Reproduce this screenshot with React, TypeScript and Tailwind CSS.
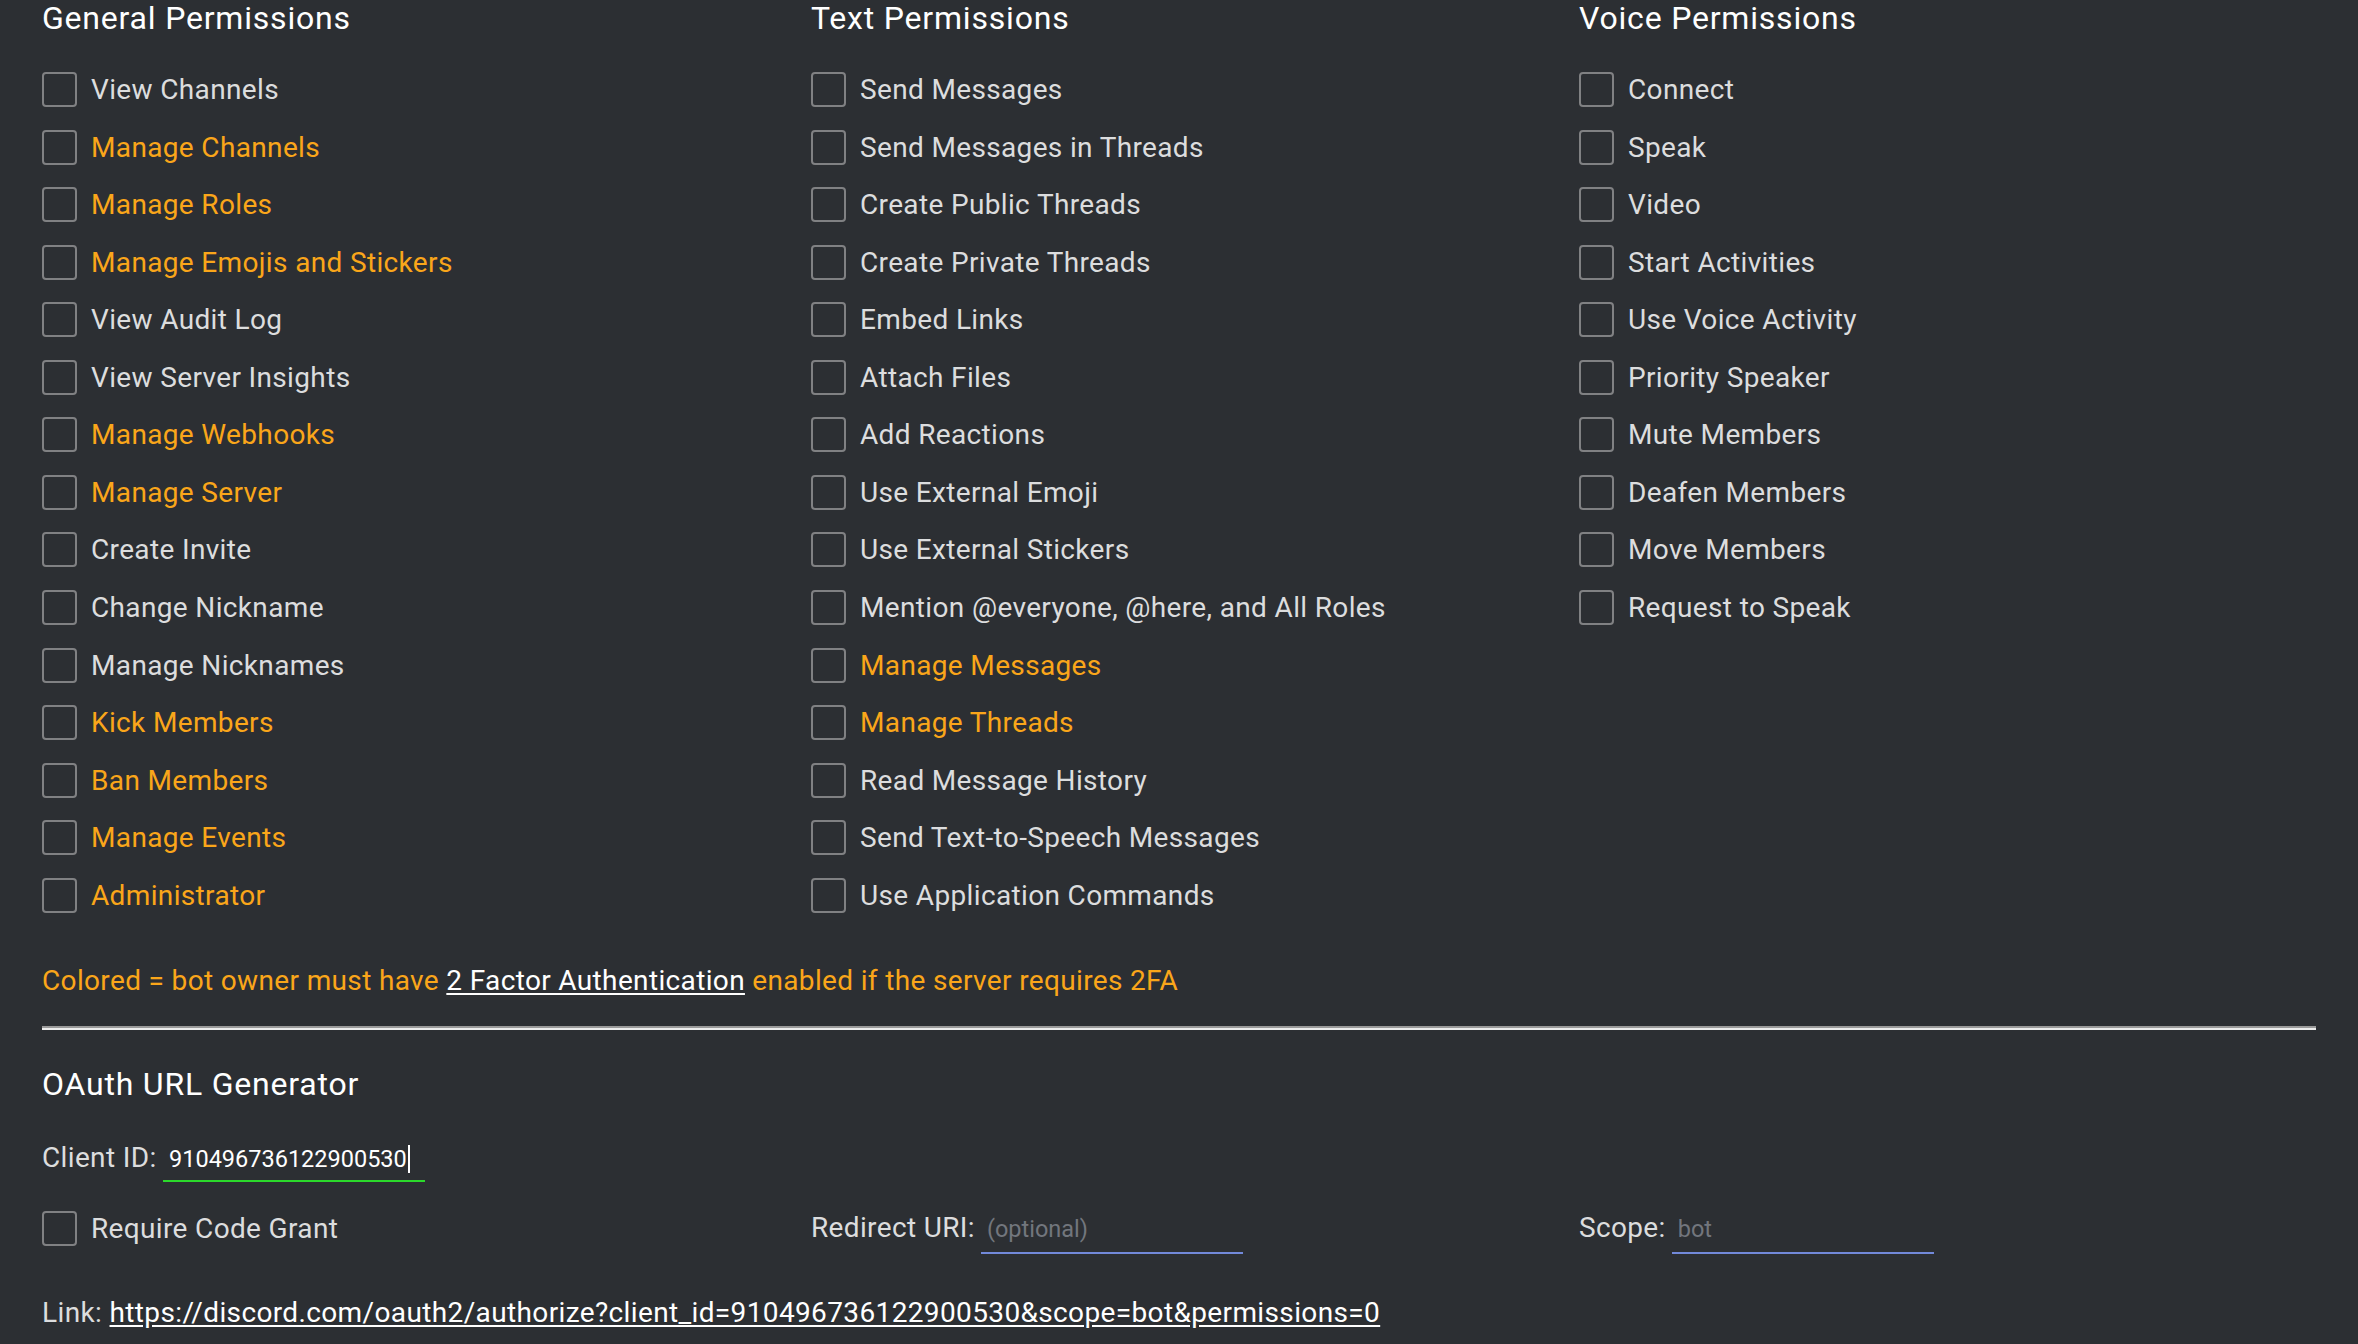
import React from "react";

type Perm = { label: string; warn?: boolean };

const general: Perm[] = [
  { label: "View Channels" },
  { label: "Manage Channels", warn: true },
  { label: "Manage Roles", warn: true },
  { label: "Manage Emojis and Stickers", warn: true },
  { label: "View Audit Log" },
  { label: "View Server Insights" },
  { label: "Manage Webhooks", warn: true },
  { label: "Manage Server", warn: true },
  { label: "Create Invite" },
  { label: "Change Nickname" },
  { label: "Manage Nicknames" },
  { label: "Kick Members", warn: true },
  { label: "Ban Members", warn: true },
  { label: "Manage Events", warn: true },
  { label: "Administrator", warn: true },
];

const text: Perm[] = [
  { label: "Send Messages" },
  { label: "Send Messages in Threads" },
  { label: "Create Public Threads" },
  { label: "Create Private Threads" },
  { label: "Embed Links" },
  { label: "Attach Files" },
  { label: "Add Reactions" },
  { label: "Use External Emoji" },
  { label: "Use External Stickers" },
  { label: "Mention @everyone, @here, and All Roles" },
  { label: "Manage Messages", warn: true },
  { label: "Manage Threads", warn: true },
  { label: "Read Message History" },
  { label: "Send Text-to-Speech Messages" },
  { label: "Use Application Commands" },
];

const voice: Perm[] = [
  { label: "Connect" },
  { label: "Speak" },
  { label: "Video" },
  { label: "Start Activities" },
  { label: "Use Voice Activity" },
  { label: "Priority Speaker" },
  { label: "Mute Members" },
  { label: "Deafen Members" },
  { label: "Move Members" },
  { label: "Request to Speak" },
];

function Box() {
  return <span className="block w-[35px] h-[35px] shrink-0 rounded-[4px] border-2 border-[#808183]" />;
}

function Column({ title, perms, width }: { title: string; perms: Perm[]; width: string }) {
  return (
    <div className={width}>
      <h3 className="text-[32px] leading-[36px] tracking-[0.8px] font-normal text-white">{title}</h3>
      <ul className="mt-[24.7px]">
        {perms.map((p) => (
          <li key={p.label} className="flex items-center h-[57.57px]">
            <Box />
            <span
              className={
                "ml-[14px] text-[28px] leading-[33px] tracking-[0.35px] whitespace-nowrap " +
                (p.warn ? "text-[#faa61a]" : "text-[#dcddde]")
              }
            >
              {p.label}
            </span>
          </li>
        ))}
      </ul>
    </div>
  );
}

export default function App() {
  return (
    <div className="min-h-screen w-full bg-[#2c2f33] font-['Roboto',sans-serif] text-[#dcddde] px-[42px] overflow-hidden">
      <div className="flex">
        <Column title="General Permissions" perms={general} width="w-[769px] shrink-0" />
        <Column title="Text Permissions" perms={text} width="w-[768px] shrink-0" />
        <Column title="Voice Permissions" perms={voice} width="w-[768px] shrink-0" />
      </div>

      <p className="mt-[39.7px] text-[28px] leading-[33px] tracking-[0.35px] text-[#faa61a] whitespace-nowrap">
        Colored = bot owner must have{" "}
        <a className="text-white underline underline-offset-[3px]" href="#">
          2 Factor Authentication
        </a>{" "}
        enabled if the server requires 2FA
      </p>

      <div className="mt-[29px] w-[2274px] h-[4px] border-t-2 border-t-[#9a9a9a] border-b-2 border-b-[#ececec]" />

      <h3 className="mt-[36px] text-[32px] leading-[36px] tracking-[0.8px] font-normal text-white">OAuth URL Generator</h3>

      <div className="mt-[39px] flex items-baseline">
        <span className="text-[28px] leading-[33px] tracking-[0.35px] text-[#dcddde]">Client ID:</span>
        <div className="ml-[6.5px] w-[262px] h-[37px] pl-[6px] pb-[7px] border-b-2 border-[#2bd92b] text-[23.5px] leading-[28px] text-white flex items-center">
          <span>910496736122900530</span>
          <span className="ml-[1px] inline-block w-[2px] h-[28px] bg-white" />
        </div>
      </div>

      <div className="mt-[23.3px] flex items-start">
        <div className="w-[769px] shrink-0 mt-[6px] flex items-center">
          <Box />
          <span className="ml-[14px] text-[28px] leading-[33px] tracking-[0.35px] text-[#dcddde]">Require Code Grant</span>
        </div>
        <div className="w-[768px] shrink-0 mt-[6px] flex items-baseline">
          <span className="text-[28px] leading-[33px] tracking-[0.35px] text-[#dcddde]">Redirect URI:</span>
          <input
            className="ml-[6px] w-[262px] h-[39px] pl-[6px] pb-[9px] bg-transparent border-b-2 border-[#7289da] text-[23.5px] leading-[28px] text-white outline-none placeholder:text-[#72767d]"
            placeholder="(optional)"
          />
        </div>
        <div className="w-[768px] shrink-0 mt-[6px] flex items-baseline">
          <span className="text-[28px] leading-[33px] tracking-[0.35px] text-[#dcddde]">Scope:</span>
          <input
            className="ml-[6px] w-[262px] h-[39px] pl-[6px] pb-[9px] bg-transparent border-b-2 border-[#7289da] text-[23.5px] leading-[28px] text-white outline-none placeholder:text-[#72767d]"
            placeholder="bot"
          />
        </div>
      </div>

      <p className="mt-[42px] text-[28px] leading-[33px] tracking-[0.37px] text-[#dcddde] whitespace-nowrap">
        Link:{" "}
        <a className="text-white underline underline-offset-[3px]" href="#">
          https://discord.com/oauth2/authorize?client_id=910496736122900530&amp;scope=bot&amp;permissions=0
        </a>
      </p>
    </div>
  );
}
